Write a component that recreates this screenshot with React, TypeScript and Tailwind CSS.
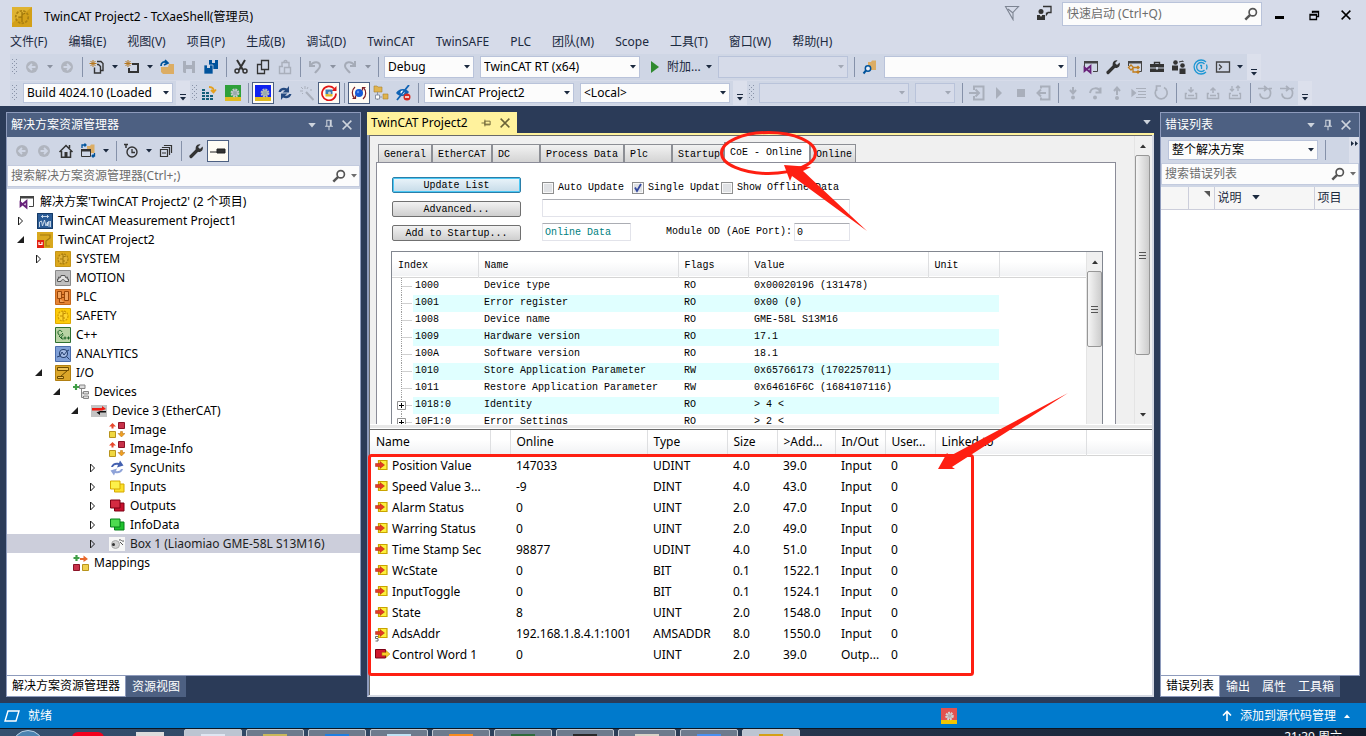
import type { ReactNode } from 'react'
import clsx from 'clsx'

const ICONS: Record<string, ReactNode> = {
  back: <><circle cx="8" cy="8" r="6" fill="#b0b5bf" /><path d="M11.5 8H5M8 5 5 8l3 3" stroke="#cfd6e5" strokeWidth="1.8" fill="none" /></>,
  forward: <><circle cx="8" cy="8" r="6" fill="#b0b5bf" /><path d="M4.5 8H11M8 5l3 3-3 3" stroke="#cfd6e5" strokeWidth="1.8" fill="none" /></>,
  newProject: <><path d="M4 1v7M.5 4.5h7M1.5 2l5 5M6.500 2l-5 5" stroke="#b5761c" /><path d="M8 2.500h4l2 2v7h-2M5.500 8.500v5.500h6V7.500l-2-2H8" stroke="#333" strokeWidth="1.400" fill="none" /></>,
  newItem: <><path d="M4 1v7M.5 4.500h7M1.500 2l5 5M6.500 2l-5 5" stroke="#b5761c" /><path d="M8 5h6v8H5V9" stroke="#333" strokeWidth="2" fill="none" /></>,
  open: <><path d="M2 13V8h7l1-3h5v10H4z" fill="#dcad64" /><path d="M2 7c0-4 3-5 6-3M6 1l3 3-4 2" stroke="#00539c" strokeWidth="1.700" fill="none" /></>,
  save: <path d="M2 2h12v12H3l-1-1zM5 2v4h6V2M5 14v-4h6v4" fill="#a9afbb" fillRule="evenodd" />,
  saveAll: <><path d="M6 1h9v9H9V7H6z" fill="#00539c" /><path d="M9 1h3v3H9z" fill="#cfd6e5" /><path d="M1 6h9v9H1z" fill="#00539c" stroke="#cfd6e5" strokeWidth=".7" /><path d="M4 6h3v3H4z" fill="#cfd6e5" /></>,
  cut: <><path d="M4 1l6 10M12 1 6 11" stroke="#333" strokeWidth="2" /><circle cx="4" cy="12" r="2" stroke="#333" strokeWidth="1.500" fill="none" /><circle cx="12" cy="12" r="2" stroke="#333" strokeWidth="1.500" fill="none" /></>,
  copy: <path d="M6.500 10.500V1.500h7v9zM6 5.500H2.500v9h7V11" stroke="#333" strokeWidth="1.300" fill="none" />,
  paste: <path d="M8 14.500H2.500v-7H6M7.500 8.500h6v6h-6zM5 7V3.500h7V8M7 3c0-2 3-2 3 0" stroke="#a9afbb" strokeWidth="1.400" fill="none" />,
  undo: <path d="M3 2v5h5M3 7c4-6 10-4 10 0 0 3-3 4-5 7" stroke="#a5abb7" strokeWidth="2" fill="none" />,
  redo: <path d="M13 2v5H8M13 7C9 1 3 3 3 7c0 3 3 4 5 7" stroke="#a5abb7" strokeWidth="2" fill="none" />,
  findFiles: <><path d="M6 3h3l1-1.500h4V11H6z" fill="#dcad64" /><circle cx="6" cy="9.500" r="2.700" stroke="#00539c" strokeWidth="1.500" fill="#e8eef8" /><path d="M4 11.500 1.500 14.500" stroke="#00539c" strokeWidth="2" /></>,
  vsWindow: <><path d="M1.500 8V2.500h13v10H10" stroke="#444" fill="none" /><path d="M1 2h14v2.500H1z" fill="#444" /><path d="M1.500 8.500l6 5V7l-6 5z" stroke="#68217a" strokeWidth="1.800" fill="none" /></>,
  wrench: <><path d="M3 13.500 9 7.500" stroke="#333" strokeWidth="3.200" strokeLinecap="round" /><path d="M12.500 1.500 10 4l2 2 2.600-2.500c1 3-1 5.500-3.600 5.500-3 0-4-3-3-5.500 1-1.500 2.500-2.500 4.500-2z" fill="#333" /></>,
  objBrowser: <><path d="M1.500 7V2.500h13v10H12" stroke="#444" fill="none" /><path d="M1 2h14v2.500H1z" fill="#444" /><path d="m4 6 2.500 2.500L4 11 1.500 8.500zM6 8.500h4M6 8.500V13h4" stroke="#c27d1a" strokeWidth="1.300" fill="#cfd6e5" /><path d="m11 6.500 2 2-2 2-2-2zM11 11l2 2-2 2-2-2z" fill="#c27d1a" /></>,
  toolbox: <><path d="M5.500 5V3.500h5V5" stroke="#333" strokeWidth="1.400" fill="none" /><path d="M1 5h14v3.500H1zM1 9.500h14V13H1z" fill="#333" /><path d="M7 8h2v2.500H7z" fill="#cfd6e5" /></>,
  team: <><circle cx="4.500" cy="3.500" r="2.300" fill="#333" /><circle cx="11.500" cy="6.500" r="2.300" fill="#333" /><path d="M1 6.500h6v5H1zM8.500 9.500h6V15h-6z" fill="#333" /><path d="M8 3l4-1v1" stroke="#333" fill="none" /></>,
  target: <><path d="M13 3a7 7 0 1 0 0 10M11.500 5a4.500 4.500 0 1 0 0 6" stroke="#1d97d4" strokeWidth="1.300" fill="none" /><path d="M7 6.500h1.500V10M13.500 5.500a6 6 0 0 1 0 5" stroke="#1d97d4" strokeWidth="1.300" fill="none" /></>,
  console: <path d="M1.500 3h13v10h-13zM4 5.500 6.500 8 4 10.500" stroke="#444" strokeWidth="1.300" fill="none" />,
  activate: <><path d="M1 4h3v2H1zM1 7h3v2H1zM5 7h3v2H5zM1 10h3v2H1zM5 10h3v2H5zM9 10h3v2H9zM1 13h3v2H1zM5 13h3v2H5zM9 13h3v2H9z" fill="#13607a" /><path d="M8 2c4 0 5 2 4.500 5M10 5l2.500 2.500L15 4.500" stroke="#e5a01c" strokeWidth="1.800" fill="none" /></>,
  cogGreen: <><path d="M0 0h16v12H0z" fill="#2fa03a" /><path d="M0 12h16v4H0z" fill="#e0bb22" /><circle cx="10" cy="8" r="3.200" stroke="#c3c8cb" strokeWidth="2.500" strokeDasharray="1.700 .8" fill="#9aa" /></>,
  cogBlue: <><path d="M0 0h16v12H0z" fill="#1022f0" /><path d="M0 12h16v4H0z" fill="#e0bb22" /><circle cx="10" cy="8" r="3.200" stroke="#b5b9bd" strokeWidth="2.500" strokeDasharray="1.700 .8" fill="#9aa" /></>,
  cogRed: <><path d="M0 0h16v12H0z" fill="#e2524f" /><path d="M0 12h16v4H0z" fill="#f2c500" /><circle cx="8.500" cy="8" r="3" stroke="#d6cfd0" strokeWidth="2.500" strokeDasharray="1.700 .8" fill="#b9a9aa" /></>,
  reload: <path d="M1.500 7c1-4 5-5 8.500-3.500L12 1v6.500H5.500L8 5.500c-2-.5-3.500 0-4 1.500zM14.500 9c-1 4-5 5-8.500 3.500L4 15V8.500h6.500L8 10.500c2 .5 3.500 0 4-1.500z" fill="#254a80" />,
  wand: <><path d="m7 7 7.500 8" stroke="#a9afbb" strokeWidth="2" /><path d="M6 1v3M1 6h3M2 2l2 2M9 2 8 4M3 9l1-1M11 5h2" stroke="#a9afbb" /></>,
  freeRun: <><path d="M13 3.500a7 7 0 1 0 2 5" stroke="#e01515" strokeWidth="1.700" fill="none" /><path d="M15.500 1v5h-5z" fill="#e01515" /><path d="M4.500 4.500h7v4.500h-7z" fill="#3c80b8" /><path d="M4.500 9h7v2.500h-7z" fill="#e0bb22" /><circle cx="8.500" cy="8" r="1.500" fill="#ccc" /></>,
  onlineData: <><circle cx="8" cy="8" r="4" fill="#1259d8" /><circle cx="7" cy="7" r="1.200" fill="#5c93f0" /><path d="M4 2C.5 5 .5 10 3.500 13.500M1.500 13.500h3v-3M12 14c3.500-3 3.500-8 .5-11.500M14.500 2.500h-3v3" stroke="#7c1f26" strokeWidth="1.200" fill="none" /></>,
  subItems: <><path d="M1 1h3l1 1h4v5H1zM10 9h5v5h-5z" fill="#e0b44f" stroke="#a9822e" strokeWidth=".6" /><path d="M4.500 7v8M4.500 12H9" stroke="#8a93a3" /><path d="M2.500 10h4v4h-4z" fill="#fff" stroke="#8a93a3" /></>,
  hideDisabled: <><path d="M1 8c3-5 10-5 13-1-3 5-10 5-13 1z" fill="#0f63b5" /><circle cx="7.500" cy="7.500" r="2" fill="#fff" /><path d="M2 15 14 0" stroke="#0f63b5" strokeWidth="1.800" /><circle cx="12" cy="12" r="3.500" fill="#d32a22" /><path d="M10 12h4" stroke="#fff" strokeWidth="1.500" /></>,
  login: <path d="M5 5V1.500h9.500v13H5V11M0 8h10M6.500 4.500 10 8l-3.500 3.500" stroke="#a9afbb" strokeWidth="2" fill="none" />,
  logout: <path d="M6 3.500v-2h8.500v13H6v-2M11 8H2.500M6 4.500 2.500 8 6 11.500" stroke="#a9afbb" strokeWidth="2" fill="none" />,
  start: <path d="M5 2 11 8l-6 6z" fill="#a9afbb" />,
  stop: <path d="M4 4h8v8H4z" fill="#a9afbb" />,
  stepInto: <><path d="M8 2v6M5 5l3 3.500L11 5" stroke="#a9afbb" strokeWidth="2" fill="none" /><circle cx="8" cy="12.500" r="2" fill="#a9afbb" /></>,
  stepOver: <><path d="M3 8c1-6 9-6 10-1M13.500 2.500V7.500h-5" stroke="#a9afbb" strokeWidth="2" fill="none" /><circle cx="8" cy="12.500" r="2" fill="#a9afbb" /></>,
  stepOut: <><path d="M8 10V3M5 6l3-3.500L11 6" stroke="#a9afbb" strokeWidth="2" fill="none" /><circle cx="8" cy="13" r="2" fill="#a9afbb" /></>,
  showNext: <path d="M5 3.500h10M7 6.500h8M7 9.500h8M5 12.500h10M1 5l3.500 3L1 11z" stroke="#a9afbb" strokeWidth="1.200" fill="#a9afbb" />,
  reset: <path d="M4 3.500a6 6 0 1 0 7-1M8 1H3.500v5" stroke="#a9afbb" strokeWidth="1.700" fill="none" />,
  down: <path d="M8 2v5M5.500 4.500 8 7l2.500-2.500M4 8.500H2.500v5h11v-5H12M5 10.500h6" stroke="#a9afbb" strokeWidth="1.500" fill="none" />,
  up: <path d="M8 8V3M5.500 5.500 8 3l2.500 2.500M4 8.500H2.500v5h11v-5H12M5 10.500h6" stroke="#a9afbb" strokeWidth="1.500" fill="none" />,
  upDown: <path d="M5 1v5M3 4l2 2 2-2M11 6V1M9 3l2-2 2 2M4 8.500H2.500v5h11v-5H12M5 10.500h6" stroke="#a9afbb" strokeWidth="1.300" fill="none" />,
  flow: <path d="M1 3.500h9M7 1l3 2.500L7 6M10 3.500c5 0 5 10-1.500 10C4 13.500 3 11 3 8.500M12 3.500h3" stroke="#a9afbb" strokeWidth="1.700" fill="none" />,
  home: <><path d="M1.500 9 8 2.500 14.500 9M3.500 8v6.300h9V8M11.500 2v3" stroke="#333" strokeWidth="1.500" fill="none" /><path d="M6.500 9h3v5h-3z" fill="#333" /></>,
  syncView: <><path d="M7 3h3l1-1.500h3.500V10H7z" fill="#dcad64" /><path d="M1.500 6.500h9v7h-9z" stroke="#333" fill="#cfd6e5" /><path d="M1 6h10v2.500H1z" fill="#333" /><path d="M2 5V2h4M4.500.5 6 2 4.500 3.500M14.500 10v3H12M13.500 11.500 12 13l1.500 1.500" stroke="#00539c" strokeWidth="1.300" fill="none" /></>,
  pending: <><path d="M1 1.500h4M3 1.500V5" stroke="#333" strokeWidth="1.500" /><circle cx="9" cy="9" r="5" stroke="#333" strokeWidth="1.400" fill="none" /><path d="M9 6v3.500h3" stroke="#333" strokeWidth="1.300" fill="none" /></>,
  collapse: <path d="M2.500 6.500h7v7h-7zM4 10h4M4.500 5V4.500h7v7H11M6.500 3V2.500h7v7H13" stroke="#333" strokeWidth="1.200" fill="none" />,
  preview: <path d="M0 9h7M7 6h8v4H7z" stroke="#222" strokeWidth="1" fill="#333" />,
  flag: <path d="M1.500 1.500h13L9 7.500v7zM4 4l5 4" stroke="#7d8492" strokeWidth="1.100" fill="none" />,
  feedback: <><path d="M7 1.500h8v6h-3l-1.500 2v-2" stroke="#333" strokeWidth="1.300" fill="none" /><circle cx="5" cy="6.500" r="2.500" fill="#333" /><path d="M1 10h8v5H1z" fill="#333" /><path d="m4 10 1 2 1-2" fill="#fff" /></>,
  search: <><circle cx="10" cy="6" r="4.200" stroke="#555" strokeWidth="1.900" fill="none" /><path d="m7 9-5.500 5.500" stroke="#555" strokeWidth="2.800" /></>,
  measurement: <><path d="M0 0h16v16H0z" fill="#2b5c96" /><path d="M.5.5h15v15H.5z" stroke="#163a66" fill="none" /><path d="M2.500 14V9l2-1 1 5 2-6 1.500 6 1.500-4V13l1.500-5v6M13.500 14V8M4 3.500h8M5.500 2v3M10.500 2v3" stroke="#d3e0ee" strokeWidth=".9" fill="none" /></>,
  project: <><path d="M0 0h16v16H0z" fill="#d9a81e" /><path d="M3 3h10v3l-4 3v5h4" stroke="#a3780c" strokeWidth="1.200" fill="none" /><path d="M0 8h7v8H0z" fill="#e32213" /><path d="M2 10v2.500h3V10" stroke="#fff" strokeWidth="1.200" fill="none" /></>,
  system: <><path d="M.5.5h15v15H.5z" fill="#dca81c" stroke="#c4951a" /><circle cx="8" cy="8" r="5" stroke="#b08210" strokeWidth="1.300" strokeDasharray="2 1" fill="#e2b43a" /><path d="M8 3v10M5 8h3M8 6l3-1M8 10h2" stroke="#a0770a" /></>,
  motion: <><path d="M.5.5h15v15H.5z" fill="#bfbfbf" stroke="#8a8a8a" /><path d="M2.500 11.500V9h1.500l-.5-2 2 .5.500-2h4l.5 2 2-.5-.5 2h1.500v2.500H10c0-2.500-4-2.500-4 0z" stroke="#555" fill="#e3e3e3" /></>,
  plc: <><path d="M.5.5h15v15H.5z" fill="#e58334" stroke="#c4661c" /><path d="M2.500 2.500h4v7h-4zM9.500 2.500h4v9h-4zM6.500 5.500h3M4.500 9.500v4h5M9.500 8.500h-3" stroke="#9a470a" fill="#f1a35e" /></>,
  safety: <><path d="M.5.5h15v15H.5z" fill="#fccb0a" stroke="#dfa900" /><circle cx="8" cy="8" r="5" stroke="#d09a00" strokeWidth="1.200" strokeDasharray="2 1" fill="#ffd52c" /><path d="M8 3v10M5 8h3M8 6l3-1M8 10h2" stroke="#c08a00" /></>,
  cpp: <><path d="M.5.5h15v15H.5z" fill="#b9d3a4" stroke="#2f7030" /><path d="M7 5C6 2.500 2.500 3 3 6s3 2.500 4 1l1-1M8.500 8c-2-1-3 5 0 4M8.500 11h3M10 9.500v3M12 11h3M13.500 9.500v3M4 9l3 3" stroke="#1d6325" fill="none" /></>,
  analytics: <><path d="M.5.5h15v15H.5z" fill="#7f9fd6" stroke="#4a6cab" /><circle cx="8.500" cy="7.500" r="4" stroke="#26406f" strokeWidth="1.100" fill="#a4bbe4" /><path d="m11.500 10.500 3 3M2 11l3-1 2-4 2 3 3-4 2-1" stroke="#26406f" fill="none" /></>,
  io: <><path d="M.5.5h15v15H.5z" fill="#dba72a" stroke="#b17f12" /><path d="M2.500 2.500h11v3h-11zM2.500 11.500h6v2h-6zM12.500 5.500 5.500 11.500" stroke="#6e4c00" fill="#eec35b" /></>,
  devices: <><path d="M3 0v6M0 3h6" stroke="#3f9e46" strokeWidth="2.200" /><path d="M6.500 1h5.500v3.500H6.500zM10.500 7.500h5v2.500h-5zM10.500 12h5v2.500h-5zM8.500 4.500v9h2M8.500 9h2" stroke="#858585" fill="#ddd" /></>,
  ethercat: <><path d="M0 2h16v12H0z" fill="#c4c4c4" /><path d="M1 5h10V3l4 3-4 1.500H1z" fill="#ef1b12" /><path d="M15 9.500H9V12L5.500 9.500 9 8h6z" fill="#111" /></>,
  image: <><path d="M9.500.5h6v6h-6z" fill="#c8324a" stroke="#8b1427" /><path d="M.5 9.500h6v6h-6z" fill="#f0d840" stroke="#b8941d" /><path d="M3.500 1 7 4.500H4.500V6.500h-2v-2H0z" fill="#e8482c" /><path d="M12.500 15 9 11.500h2.500V9.500h2v2H16z" fill="#f0a020" stroke="#b06c10" strokeWidth=".5" /></>,
  sync: <><path d="M2 7c1-4 5-5 8-4l1-2.500 3.500 5-6.500 2 1-2.500C7 4.500 5 5 4 7z" fill="#4461b0" /><path d="M14 9c-1 4-5 5-8 4l-1 2.500-3.500-5 6.500-2-1 2.500c2 .5 4 0 5-2z" fill="#8fa3d8" /></>,
  inputs: <><path d="M5.500 5h9.500v8H5.500z" fill="#fbe02c" stroke="#d5a900" /><path d="M1.500 2h9.500v8H1.500z" fill="#fdf04a" stroke="#d5a900" /></>,
  outputs: <><path d="M5.500 5h9.500v8H5.500z" fill="#c8102e" stroke="#7c0014" /><path d="M1.500 2h9.500v8H1.500z" fill="#d42b42" stroke="#7c0014" /></>,
  infoData: <><path d="M5.500 5h9.500v8H5.500z" fill="#1fc22d" stroke="#07801a" /><path d="M1.500 2h9.500v8H1.500z" fill="#4ddb4f" stroke="#07801a" /></>,
  box: <><path d="M0 1h16v14H0z" fill="#f6f6f6" /><circle cx="6.500" cy="8.500" r="4" fill="#d2d2d2" stroke="#aaa" /><circle cx="4.500" cy="8.500" r="1.500" fill="#333" /><path d="M10 4c2-1 3 2 5 1M11 6l3 3" stroke="#555" fill="none" /></>,
  mappings: <><path d="M3.500 0v6M.5 3h6" stroke="#3f9e46" strokeWidth="2.200" /><path d="M7 3h3.500V.5l4.500 3.500-4.500 3V5H7z" fill="#e8682c" /><path d="M.5 9.500h6v6h-6z" fill="#c8324a" stroke="#8b1427" /><path d="M9.500 9.500h6v6h-6z" fill="#f0d050" stroke="#b8941d" /></>,
  varIn: <><path d="M3.500 2.500h8.500v9h-8.500z" fill="#fdf03c" stroke="#c9a300" strokeWidth="1.200" /><path d="M.5 5.500h4.500V3.500L9.500 7 5 10.500V8.500H.5z" fill="#e23a25" stroke="#b02412" strokeWidth=".5" /></>,
  varLinked: <><path d="M3.500 2.500h8.500v9h-8.500z" fill="#fdf03c" stroke="#c9a300" strokeWidth="1.200" /><path d="M.5 5.500h4.500V3.500L9.500 7 5 10.500V8.500H.5z" fill="#e23a25" stroke="#b02412" strokeWidth=".5" /><path d="M3 10.500H.5v2H3v2.500H.5" stroke="#666" fill="none" /></>,
  varOut: <><path d="M.5 2.500h10v8.500H.5z" fill="#d0182e" stroke="#7c0014" /><path d="M7 5.500h4V3.500L15 7l-4 3.500V8.500H7z" fill="#f8cd2d" stroke="#b18500" strokeWidth=".5" /></>,
  app: <><path d="M0 0h16v16H0z" fill="#d3a018" /><path d="M0 0h16L0 13z" fill="#e8bf43" opacity=".6" /><circle cx="8" cy="8" r="5" stroke="#ac8111" strokeWidth="1.400" strokeDasharray="2 1" fill="none" /><path d="M8 4v8M5 8h3M8 6l2.500-1" stroke="#9c7408" /></>,
  pin: <path d="M5.500 2.500h5v7h-5zM3.500 9.500h9M8 10v4M9.500 3v6" stroke="currentColor" strokeWidth="1.200" fill="none" />,
  close: <path d="m3 3 10 10M13 3 3 13" stroke="currentColor" strokeWidth="1.700" fill="none" />,
}

function Icon({ name, className = 'size-4' }: { name: string; className?: string }) {
  return (
    <svg viewBox="0 0 16 16" className={clsx('shrink-0', className)} aria-hidden="true">
      {ICONS[name]}
    </svg>
  )
}

function Arrow({ className = 'h-1 w-1.5' }: { className?: string }) {
  return (
    <svg viewBox="0 0 6 4" className={clsx('shrink-0 fill-current', className)} aria-hidden="true">
      <path d="M0 0h6L3 3.500z" />
    </svg>
  )
}

function ToolButton({ name, boxed }: { name: string; boxed?: boolean }) {
  return (
    <button
      aria-label={name}
      className={clsx('flex h-[22px] w-[22px] shrink-0 items-center justify-center', boxed && 'border border-[#4d6082] bg-[#fffcf4]')}
    >
      <Icon name={name} />
    </button>
  )
}

function Caret({ disabled }: { disabled?: boolean }) {
  return (
    <button aria-label="More" className={clsx('flex h-[22px] w-[13px] shrink-0 items-center justify-center', disabled ? 'text-[#8b92a0]' : 'text-[#1b293e]')}>
      <Arrow />
    </button>
  )
}

function Sep() {
  return (
    <div className="flex w-2 shrink-0 justify-center">
      <div className="h-5 w-px bg-[#8591a9]" />
    </div>
  )
}

// Dotted drag handle at the start of each toolbar
function Grip() {
  return (
    <svg viewBox="0 0 8 18" className="h-[18px] w-2 shrink-0" aria-hidden="true">
      <path d="M2.500 1v16M6.500 1v16" stroke="#8993a8" strokeDasharray="1 3" />
      <path d="M4.500 3v14" stroke="#8993a8" strokeDasharray="1 3" />
    </svg>
  )
}

function Overflow() {
  return (
    <button aria-label="Toolbar options" className="flex h-full w-3.5 shrink-0 flex-col items-center justify-end gap-0.5 bg-[#dce0ec] pb-1 text-[#1b293e]">
      <span className="h-px w-1.5 bg-current" />
      <Arrow />
    </button>
  )
}

function Combo({ label, value, className, disabled }: { label: string; value: string; className: string; disabled?: boolean }) {
  return (
    <div className={clsx('relative shrink-0', className)}>
      <select
        aria-label={label}
        disabled={disabled}
        className={clsx('h-full w-full appearance-none border border-[#b9c3da] pl-[3px] text-black', disabled ? 'bg-[#d6dbe9]' : 'bg-[#fcfcfc]')}
      >
        <option>{value}</option>
      </select>
      <Arrow className={clsx('pointer-events-none absolute top-1/2 right-1 -mt-0.5 h-1 w-1.5', disabled ? 'text-[#a2a8b5]' : 'text-[#1b293e]')} />
    </div>
  )
}

const MENUS = ['文件(F)', '编辑(E)', '视图(V)', '项目(P)', '生成(B)', '调试(D)', 'TwinCAT', 'TwinSAFE', 'PLC', '团队(M)', 'Scope', '工具(T)', '窗口(W)', '帮助(H)']

function TitleBar() {
  return (
    <div className="flex h-[30px] shrink-0 items-center pr-1.5 pl-3">
      <Icon name="app" className="mt-1 size-5" />
      <div className="mt-1 ml-3 flex-1 text-black">TwinCAT Project2 - TcXaeShell(管理员)</div>
      <button aria-label="Notifications" className="mr-4 mb-1"><Icon name="flag" /></button>
      <button aria-label="Feedback" className="mr-2.5 mb-1"><Icon name="feedback" /></button>
      <div className="mb-0.5 flex h-6 w-[200px] items-center border border-[#b9c3da] bg-[#fcfcfc] pr-[3px] pl-1">
        <input aria-label="快速启动" placeholder="快速启动 (Ctrl+Q)" className="min-w-0 flex-1 outline-none placeholder:text-[#6d6d6d]" />
        <Icon name="search" className="size-3.5" />
      </div>
      <button aria-label="Minimize" className="flex h-6 w-[34px] items-center justify-center"><span className="mt-1 h-[3px] w-[9px] bg-black" /></button>
      <button aria-label="Restore" className="flex h-6 w-9 items-center justify-center">
        <svg viewBox="0 0 11 11" className="size-[11px]"><path d="M3.500 3V1.500h6v5H8M1 4.500h6.500v5H1zM1 5h6M3.500 2h6" stroke="#000" strokeWidth="1.300" fill="none" /></svg>
      </button>
      <button aria-label="Close" className="flex h-6 w-7 items-center justify-center text-black"><Icon name="close" className="size-3.5" /></button>
    </div>
  )
}

function Toolbars() {
  return (
    <div className="flex shrink-0 flex-col gap-px overflow-hidden pb-px pl-2.5 text-black">
      <div className="flex h-[26px] w-fit items-center bg-[#cfd6e5]">
        <Grip />
        <div className="w-[3px]" />
        <ToolButton name="back" /><Caret disabled /><ToolButton name="forward" /><Sep />
        <ToolButton name="newProject" /><Caret /><ToolButton name="newItem" /><Caret />
        <ToolButton name="open" /><ToolButton name="save" /><ToolButton name="saveAll" /><Sep />
        <ToolButton name="cut" /><ToolButton name="copy" /><ToolButton name="paste" /><Sep />
        <ToolButton name="undo" /><Caret disabled /><ToolButton name="redo" /><Caret disabled /><Sep />
        <Combo label="Configuration" value="Debug" className="ml-0.5 h-[22px] w-[90px]" />
        <Combo label="Platform" value="TwinCAT RT (x64)" className="ml-1.5 h-[22px] w-40" />
        <button className="ml-[11px] flex items-center gap-2 text-[#1b293e]">
          <svg viewBox="0 0 8 12" className="h-3 w-2"><path d="M0 0l8 6-8 6z" fill="#2f8a2f" /></svg>
          附加...
        </button>
        <div className="w-0.5" />
        <Caret />
        <Combo label="Process" value="" disabled className="ml-0.5 h-[22px] w-[130px]" />
        <div className="w-[3px]" />
        <Sep />
        <ToolButton name="findFiles" />
        <Combo label="Find" value="" className="ml-[3px] h-[22px] w-[184px]" />
        <div className="w-1" />
        <Sep />
        <ToolButton name="vsWindow" /><ToolButton name="wrench" /><ToolButton name="objBrowser" /><ToolButton name="toolbox" />
        <ToolButton name="team" /><ToolButton name="target" /><ToolButton name="console" /><Caret />
        <Overflow />
      </div>
      <div className="flex h-6 w-fit items-center bg-[#cfd6e5]">
        <Grip />
        <Combo label="Build" value="Build 4024.10 (Loaded" className="ml-[5px] h-5 w-[150px]" />
        <div className="w-[3px]" />
        <Overflow />
        <Grip />
        <ToolButton name="activate" />
        <div className="w-0.5" />
        <ToolButton name="cogGreen" /><Sep />
        <ToolButton name="cogBlue" boxed /><ToolButton name="reload" /><ToolButton name="wand" /><ToolButton name="freeRun" boxed /><Sep />
        <ToolButton name="onlineData" boxed /><ToolButton name="subItems" /><ToolButton name="hideDisabled" /><Sep />
        <Combo label="Project" value="TwinCAT Project2" className="ml-0.5 h-5 w-[150px]" />
        <Combo label="Target" value="<Local>" className="ml-1.5 h-5 w-[150px]" />
        <div className="w-[3px]" />
        <Overflow />
        <Grip />
        <Combo label="PLC project" value="" disabled className="ml-1 h-5 w-[150px]" />
        <Combo label="Port" value="" disabled className="ml-1.5 h-5 w-10" />
        <div className="w-[3px]" />
        <Sep />
        <ToolButton name="login" /><ToolButton name="start" /><ToolButton name="stop" /><ToolButton name="logout" /><Sep />
        <ToolButton name="stepInto" /><ToolButton name="stepOver" /><ToolButton name="stepOut" /><ToolButton name="showNext" /><ToolButton name="reset" /><Sep />
        <ToolButton name="down" /><ToolButton name="up" /><ToolButton name="upDown" /><Sep />
        <ToolButton name="flow" /><ToolButton name="flow" />
        <Overflow />
      </div>
    </div>
  )
}

function PanelTitle({ title }: { title: string }) {
  return (
    <div className="flex h-6 shrink-0 items-center bg-[#4d6082] pr-1.5 pl-1 text-white">
      <h2 className="flex-1">{title}</h2>
      <button aria-label="Options" className="flex w-4 justify-center text-[#ced4dd]"><Arrow className="h-[5px] w-2" /></button>
      <button aria-label="Pin" className="ml-0.5 text-[#ced4dd]"><Icon name="pin" className="size-3.5" /></button>
      <button aria-label="Close" className="ml-1 text-[#ced4dd]"><Icon name="close" className="size-3.5" /></button>
    </div>
  )
}

function SearchBox({ label, placeholder }: { label: string; placeholder: string }) {
  return (
    <div className="flex h-[22px] shrink-0 items-center border border-[#c3cbde] bg-[#fcfcfc] pr-0.5 pl-[3px]">
      <input aria-label={label} placeholder={placeholder} className="min-w-0 flex-1 outline-none placeholder:text-[#6d6d6d]" />
      <Icon name="search" className="size-3.5" />
      <Arrow className="ml-[5px] h-1 w-1.5 text-[#6d6d6d]" />
    </div>
  )
}

const INDENT = ['pl-2.5', 'pl-7', 'pl-[46px]', 'pl-16', 'pl-[82px]']

type Node = { level: number; icon: string; text: string; state?: 'open' | 'closed'; selected?: boolean }

const TREE: Node[] = [
  { level: 0, icon: 'measurement', text: 'TwinCAT Measurement Project1', state: 'closed' },
  { level: 0, icon: 'project', text: 'TwinCAT Project2', state: 'open' },
  { level: 1, icon: 'system', text: 'SYSTEM', state: 'closed' },
  { level: 1, icon: 'motion', text: 'MOTION' },
  { level: 1, icon: 'plc', text: 'PLC' },
  { level: 1, icon: 'safety', text: 'SAFETY' },
  { level: 1, icon: 'cpp', text: 'C++' },
  { level: 1, icon: 'analytics', text: 'ANALYTICS' },
  { level: 1, icon: 'io', text: 'I/O', state: 'open' },
  { level: 2, icon: 'devices', text: 'Devices', state: 'open' },
  { level: 3, icon: 'ethercat', text: 'Device 3 (EtherCAT)', state: 'open' },
  { level: 4, icon: 'image', text: 'Image' },
  { level: 4, icon: 'image', text: 'Image-Info' },
  { level: 4, icon: 'sync', text: 'SyncUnits', state: 'closed' },
  { level: 4, icon: 'inputs', text: 'Inputs', state: 'closed' },
  { level: 4, icon: 'outputs', text: 'Outputs', state: 'closed' },
  { level: 4, icon: 'infoData', text: 'InfoData', state: 'closed' },
  { level: 4, icon: 'box', text: 'Box 1 (Liaomiao GME-58L S13M16)', state: 'closed', selected: true },
  { level: 2, icon: 'mappings', text: 'Mappings' },
]

function TreeRow({ node }: { node: Node }) {
  return (
    <li className={clsx('flex h-[19px] items-center', INDENT[node.level], node.selected && 'bg-[#cccedb] text-[#1e1e1e]')}>
      <span className="w-5 shrink-0">
        {node.state && (
          <svg viewBox="0 0 8 10" className="h-2.5 w-2">
            {node.state === 'open' ? <path d="M7 1v7H0z" fill="#1e1e1e" /> : <path d="M1.500 1 5.500 5l-4 4z" stroke="#1e1e1e" fill="none" />}
          </svg>
        )}
      </span>
      <Icon name={node.icon} />
      <span className="ml-[5px] whitespace-nowrap">{node.text}</span>
    </li>
  )
}

function SolutionExplorer() {
  return (
    <div className="flex w-[355px] shrink-0 flex-col">
      <div className="flex min-h-0 flex-1 flex-col border border-[#8e9bbc] bg-white">
        <PanelTitle title="解决方案资源管理器" />
        <div className="flex h-7 shrink-0 items-center bg-[#cfd6e5] pl-1">
          <ToolButton name="back" /><ToolButton name="forward" /><ToolButton name="home" /><ToolButton name="syncView" /><Caret />
          <Sep />
          <ToolButton name="pending" /><Caret /><ToolButton name="collapse" /><Sep />
          <ToolButton name="wrench" /><ToolButton name="preview" boxed />
        </div>
        <SearchBox label="搜索解决方案资源管理器" placeholder="搜索解决方案资源管理器(Ctrl+;)" />
        <ul className="min-h-0 flex-1 overflow-hidden border-t-2 border-[#cfd6e5] pt-[3px] text-black">
          <li className="flex h-[19px] items-center pl-3">
            <Icon name="vsWindow" />
            <span className="ml-[5px]">解决方案'TwinCAT Project2' (2 个项目)</span>
          </li>
          {TREE.map((node) => <TreeRow key={node.text} node={node} />)}
        </ul>
      </div>
      <div className="flex h-[21px] shrink-0">
        <button className="border-x border-b border-[#8e9bbc] bg-white px-[5px] text-black">解决方案资源管理器</button>
        <button className="bg-[#4d6082] px-1.5 text-white">资源视图</button>
      </div>
    </div>
  )
}

const TABS = [
  { text: 'General', width: 'w-[54px]' },
  { text: 'EtherCAT', width: 'w-[60px]' },
  { text: 'DC', width: 'w-12' },
  { text: 'Process Data', width: 'w-[84px]' },
  { text: 'Plc', width: 'w-12' },
  { text: 'Startup', width: 'w-[52px]' },
  { text: 'CoE - Online', width: 'w-[86px]', active: true },
  { text: 'Online', width: 'w-[46px]' },
]

const OBJECTS = [
  ['1000', 'Device type', 'RO', '0x00020196 (131478)'],
  ['1001', 'Error register', 'RO', '0x00 (0)'],
  ['1008', 'Device name', 'RO', 'GME-58L S13M16'],
  ['1009', 'Hardware version', 'RO', '17.1'],
  ['100A', 'Software version', 'RO', '18.1'],
  ['1010', 'Store Application Parameter', 'RW', '0x65766173 (1702257011)'],
  ['1011', 'Restore Application Parameter', 'RW', '0x64616F6C (1684107116)'],
  ['1018:0', 'Identity', 'RO', '> 4 <'],
  ['10F1:0', 'Error Settings', 'RO', '> 2 <'],
]

function Check({ label, checked }: { label: string; checked?: boolean }) {
  return (
    <label className="flex items-center gap-1 overflow-hidden whitespace-nowrap">
      <span className="grid size-3 shrink-0">
        <input type="checkbox" defaultChecked={checked} className="peer col-start-1 row-start-1 size-3 appearance-none border border-[#8e8f8f] bg-[#dfe1e4] shadow-[inset_0_0_0_1px_#f8f8f8]" />
        <svg viewBox="0 0 12 12" className="pointer-events-none invisible col-start-1 row-start-1 size-3 peer-checked:visible">
          <path d="m3 5.500 2 3.500 4-7" stroke="#3449a0" strokeWidth="1.800" fill="none" />
        </svg>
      </span>
      {label}
    </label>
  )
}

function FormButton({ children, focused }: { children: ReactNode; focused?: boolean }) {
  return (
    <button
      className={clsx(
        'h-4 rounded-[2px] border text-center leading-4',
        focused ? 'border-[#2b7ea8] bg-linear-to-b from-[#eaf4fa] to-[#c6dbe8] shadow-[inset_0_0_0_1px_#4bc8f5]' : 'border-[#707070] bg-linear-to-b from-[#f2f2f2] to-[#cfcfcf]',
      )}
    >
      {children}
    </button>
  )
}

function ScrollBar({ thumb, tail }: { thumb: string; tail?: boolean }) {
  return (
    <div className="flex w-4 shrink-0 flex-col items-center border-l border-[#e4e4e4] bg-[#f0f0f0] text-[#333]">
      <div className="flex h-[19px] shrink-0 items-center"><Arrow className="h-1 w-1.5 rotate-180" /></div>
      <div className={clsx('flex w-[15px] shrink-0 flex-col items-center justify-center gap-0.5 rounded-[2px] border border-[#979797] bg-linear-to-r from-[#f5f5f5] to-[#cdcdcd]', thumb)}>
        <span className="h-px w-[7px] bg-[#555]" />
        <span className="h-px w-[7px] bg-[#555]" />
        <span className="h-px w-[7px] bg-[#555]" />
      </div>
      {tail && <div className="mt-auto flex h-[18px] items-center"><Arrow /></div>}
    </div>
  )
}

const OBJ_TH = 'border-r border-[#dedfe1] pt-1 pl-1.5 text-left font-normal'

function ObjectTable() {
  return (
    <div className="mr-3 ml-3.5 flex min-h-0 flex-1 overflow-hidden border border-b-0 border-[#828790] bg-white">
      <div className="min-w-0 flex-1">
        <table className="w-full table-fixed border-collapse">
          <colgroup>
            <col className="w-[21px]" /><col className="w-[65px]" /><col className="w-[200px]" /><col className="w-[70px]" />
            <col className="w-[180px]" /><col className="w-[71px]" /><col />
          </colgroup>
          <thead>
            <tr className="h-[25px] border-b border-[#d5d5d5] bg-linear-to-b from-white from-40% to-[#f1f2f4]">
              <th colSpan={2} className={OBJ_TH}>Index</th>
              <th className={OBJ_TH}>Name</th>
              <th className={OBJ_TH}>Flags</th>
              <th className={OBJ_TH}>Value</th>
              <th className={OBJ_TH}>Unit</th>
              <th />
            </tr>
          </thead>
          <tbody>
            {OBJECTS.map(([index, name, flags, value], i) => {
              const stripe = i % 2 === 1 && 'bg-[#e0ffff]'
              return (
                <tr key={index} className="h-[17px] whitespace-nowrap">
                  <td>
                    <svg viewBox="0 0 21 17" className="block h-[17px] w-[21px]">
                      <path d="M9.500 0v17M9.500 8.500H20" stroke="#a0a0a0" strokeDasharray="1 1" fill="none" />
                      {index.includes(':') && (
                        <>
                          <path d="M5.500 4.500h8v8h-8z" fill="#fff" stroke="#919191" />
                          <path d="M7 8.500h5M9.500 6v5" stroke="#000" />
                        </>
                      )}
                    </svg>
                  </td>
                  <td className={clsx('pl-0.5', stripe)}>{index}</td>
                  <td className={clsx('pl-1.5', stripe)}>{name}</td>
                  <td className={clsx('pl-1.5', stripe)}>{flags}</td>
                  <td className={clsx('pl-1.5', stripe)}>{value}</td>
                  <td className={clsx(stripe)} />
                  <td />
                </tr>
              )
            })}
          </tbody>
        </table>
      </div>
      <ScrollBar thumb="h-[76px]" />
    </div>
  )
}

const FIELD = 'h-[18px] rounded-[1px] border border-[#e2e3ea] border-t-[#abadb3] bg-white px-0.5 outline-none'

function DevicePages() {
  return (
    <div className="flex h-[288px] shrink-0 overflow-hidden bg-[#f0f0f0] pr-0.5 font-['Liberation_Mono','Noto_Sans_CJK_SC',monospace] text-[10px] text-black">
      <div className="flex min-w-0 flex-1 flex-col pt-1.5 pr-[18px] pl-1.5">
        <div role="tablist" className="flex h-5 shrink-0 items-end pl-0.5">
          {TABS.map((tab) => (
            <button
              key={tab.text}
              role="tab"
              aria-selected={!!tab.active}
              className={clsx(
                'overflow-hidden border border-b-0 border-[#8c8e94] pl-[5px] text-left whitespace-nowrap',
                tab.width,
                tab.active ? 'h-5 bg-white' : 'h-[18px] bg-linear-to-b from-[#f2f2f2] to-[#d4d4d4] pt-0.5',
              )}
            >
              {tab.text}
            </button>
          ))}
        </div>
        <div className="flex min-h-0 flex-1 flex-col border border-b-0 border-[#8b8c98] bg-white">
          <div className="flex gap-[21px] pt-3.5 pb-2.5 pl-[15px]">
            <div className="flex w-[129px] flex-col gap-2">
              <FormButton focused>Update List</FormButton>
              <FormButton>Advanced...</FormButton>
              <FormButton>Add to Startup...</FormButton>
            </div>
            <div className="flex w-[308px] flex-col">
              <div className="flex h-[22px] items-center">
                <div className="w-[90px] shrink-0"><Check label="Auto Update" /></div>
                <div className="w-[89px] shrink-0 overflow-hidden"><Check label="Single Updat" checked /></div>
                <div className="shrink-0"><Check label="Show Offline Data" /></div>
              </div>
              <input aria-label="Offline file" className={FIELD} />
              <div className="mt-1.5 flex items-center justify-between">
                <input aria-label="Data source" readOnly defaultValue="Online Data" className={clsx(FIELD, 'w-[89px] text-[#008080]')} />
                <label className="flex items-center gap-0.5 whitespace-nowrap">
                  Module OD (AoE Port):
                  <input defaultValue="0" className={clsx(FIELD, 'w-14')} />
                </label>
              </div>
            </div>
          </div>
          <ObjectTable />
        </div>
      </div>
      <ScrollBar thumb="h-[200px]" tail />
    </div>
  )
}

const VARIABLES = [
  ['varIn', 'Position Value', '147033', 'UDINT', '4.0', '39.0', 'Input'],
  ['varIn', 'Speed Value 3...', '-9', 'DINT', '4.0', '43.0', 'Input'],
  ['varIn', 'Alarm Status', '0', 'UINT', '2.0', '47.0', 'Input'],
  ['varIn', 'Warring Status', '0', 'UINT', '2.0', '49.0', 'Input'],
  ['varIn', 'Time Stamp Sec', '98877', 'UDINT', '4.0', '51.0', 'Input'],
  ['varIn', 'WcState', '0', 'BIT', '0.1', '1522.1', 'Input'],
  ['varIn', 'InputToggle', '0', 'BIT', '0.1', '1524.1', 'Input'],
  ['varIn', 'State', '8', 'UINT', '2.0', '1548.0', 'Input'],
  ['varLinked', 'AdsAddr', '192.168.1.8.4.1:1001', 'AMSADDR', '8.0', '1550.0', 'Input'],
  ['varOut', 'Control Word 1', '0', 'UINT', '2.0', '39.0', 'Outp...'],
]

const VAR_HEADS = ['Name', '', 'Online', 'Type', 'Size', '>Add...', 'In/Out', 'User...', 'Linked to']

function VariableTable() {
  return (
    <div className="min-h-0 flex-1 overflow-hidden border-t border-[#696969] bg-white text-black">
      <table className="w-full table-fixed border-collapse">
        <colgroup>
          <col className="w-[120px]" /><col className="w-5" /><col className="w-[137px]" /><col className="w-20" /><col className="w-[50px]" />
          <col className="w-[58px]" /><col className="w-[50px]" /><col className="w-[50px]" /><col className="w-[151px]" /><col />
        </colgroup>
        <thead>
          <tr className="h-[25px] border-b border-[#d5d5d5] bg-linear-to-b from-white from-40% to-[#f1f2f4]">
            {VAR_HEADS.map((head) => (
              <th key={head} className="border-r border-[#dedfe1] pl-1.5 text-left font-normal whitespace-nowrap">{head}</th>
            ))}
            <th />
          </tr>
        </thead>
        <tbody>
          {VARIABLES.map(([icon, name, online, type, size, addr, dir]) => (
            <tr key={name} className="h-[21px] whitespace-nowrap">
              <td className="pl-[5px]">
                <span className="flex items-center gap-px">
                  <Icon name={icon} />
                  {name}
                </span>
              </td>
              <td />
              <td className="pl-1.5">{online}</td>
              <td className="pl-1.5">{type}</td>
              <td className="pl-1.5">{size}</td>
              <td className="pl-1.5">{addr}</td>
              <td className="pl-1.5">{dir}</td>
              <td className="pl-1.5">0</td>
              <td />
              <td />
            </tr>
          ))}
        </tbody>
      </table>
    </div>
  )
}

// Red marks drawn over the editor: tab ellipse, two arrows and the frame round the live values
function Annotations() {
  return (
    <svg className="pointer-events-none absolute top-0 left-0 h-[585px] w-[787px]" viewBox="367 112 787 585" aria-hidden="true">
      <g fill="none" stroke="#fe1f12" strokeWidth="3">
        <ellipse cx="768.500" cy="153" rx="47" ry="20.500" />
        <rect x="369.500" y="455.500" width="603" height="219" rx="2" />
      </g>
      <g fill="#fe1f12">
        <path d="M784 165l27 2-8 4 64 60-75-55-2 5z" />
        <path d="M938 469l9-16 3 3 118-63-113 72-3 2 3 2z" />
      </g>
    </svg>
  )
}

function Editor() {
  return (
    <div className="relative flex min-w-0 flex-1 flex-col">
      <div className="flex h-[21px] shrink-0 items-center justify-between">
        <div className="flex h-full items-center bg-[#fff29d] pr-[5px] pl-1 text-black">
          TwinCAT Project2
          <button aria-label="Pin tab" className="ml-3 text-[#6b6337]"><Icon name="pin" className="size-3 rotate-90" /></button>
          <button aria-label="Close tab" className="ml-1.5 text-[#6b6337]"><Icon name="close" className="size-3.5" /></button>
        </div>
        <button aria-label="Open documents" className="pr-[3px] text-[#ced4dd]"><Arrow className="h-[5px] w-2" /></button>
      </div>
      <div className="h-0.5 shrink-0 bg-[#fff29d]" />
      <div className="flex min-h-0 flex-1 flex-col border-x-2 border-b-2 border-[#8e9bbc] border-b-[#d5d9e3] border-r-[#d5d9e3] bg-[#f0f0f0]">
        <div className="flex min-h-0 flex-1 flex-col border-t border-l border-[#696969]">
          <DevicePages />
          <div className="h-[5px] shrink-0 border-y border-white bg-[#e8e8e8]" />
          <VariableTable />
        </div>
      </div>
      <Annotations />
    </div>
  )
}

function ErrorList() {
  return (
    <div className="flex w-[200px] shrink-0 flex-col">
      <div className="flex min-h-0 flex-1 flex-col border border-[#8e9bbc] bg-white">
        <PanelTitle title="错误列表" />
        <div className="flex h-[26px] shrink-0 items-center bg-[#cfd6e5] pl-[7px] text-black">
          <Combo label="Scope" value="整个解决方案" className="h-5 w-[150px]" />
          <div className="w-[3px]" />
          <Sep />
          <button aria-label="More options" className="ml-auto flex h-full w-2.5 justify-center bg-[#dce0ec] pt-1">
            <svg viewBox="0 0 7 5" className="h-[5px] w-[7px]"><path d="M0 0l3 2.500L0 5zM4 0l3 2.500L4 5z" fill="#1b293e" /></svg>
          </button>
        </div>
        <SearchBox label="搜索错误列表" placeholder="搜索错误列表" />
        <div className="flex-1 border-t-2 border-[#cfd6e5]">
          <table className="w-full table-fixed border-collapse text-[#1b293e]">
            <colgroup><col className="w-[27px]" /><col className="w-[26px]" /><col className="w-[100px]" /><col /></colgroup>
            <thead>
              <tr className="h-[22px] border-b border-[#cccedb] bg-[#f6f6f6]">
                <th className="border-r border-[#cccedb]" />
                <th className="border-r border-[#cccedb] pr-1 pb-2">
                  <svg viewBox="0 0 6 6" className="ml-auto size-1.5"><path d="M0 0h6v6z" fill="#555" /></svg>
                </th>
                <th className="border-r border-[#cccedb] pl-[3px] text-left font-normal">
                  <span className="flex items-center gap-2.5">说明 <Arrow className="h-[5px] w-2" /></span>
                </th>
                <th className="pl-[3px] text-left font-normal">项目</th>
              </tr>
            </thead>
          </table>
        </div>
      </div>
      <div className="flex h-[21px] shrink-0 text-white">
        <button className="border-x border-b border-[#8e9bbc] bg-white px-[5px] text-black">错误列表</button>
        <button className="bg-[#4d6082] px-1.5">输出</button>
        <button className="bg-[#4d6082] px-1.5">属性</button>
        <button className="bg-[#4d6082] px-1.5">工具箱</button>
      </div>
    </div>
  )
}

const TASKS = [
  'bg-[#dfe6f2]', 'bg-[#c9b85a]', 'bg-[#1f7fe0]', 'bg-[#bfe3f5]', 'bg-[#f78b1f]',
  'bg-[#2f6b3c]', 'bg-[#2a2a2a]', 'bg-[#d8d4c8]', 'bg-[#4a90f0]', 'bg-[#d3a018]',
]

function Taskbar() {
  return (
    <div className="flex h-2 shrink-0 items-start gap-1 overflow-hidden border-t border-[#0c1622] bg-linear-to-r from-[#34506f] via-[#2a3c55] to-[#131c2c] pl-3">
      <div className="mt-px h-8 w-8 shrink-0 rounded-full border border-[#b8d3e8] bg-[#4b83b0]" />
      <div className="mt-[3px] ml-6 h-4 w-8 shrink-0 rounded-md bg-[#f4001c]" />
      <div className="mt-[3px] mr-4 ml-7 h-4 w-7 shrink-0 bg-[#dcdcdc]" />
      {TASKS.map((color, i) => (
        <div key={color} className={clsx('flex h-8 w-[58px] shrink-0 justify-center rounded-[2px] border border-[#c3cad3] pt-1', i === 9 || i === 0 ? 'bg-[#bcc5d2]' : 'bg-[#6d7b8d]')}>
          <span className={clsx('h-6 w-6', color)} />
        </div>
      ))}
      <div className="ml-auto pr-6 text-white">21:30 周六</div>
    </div>
  )
}

export default function App() {
  return (
    <div className="flex h-screen flex-col overflow-hidden bg-[#d6dbe9] font-['Noto_Sans','Noto_Sans_CJK_SC',sans-serif] text-[12px] leading-4">
      <TitleBar />
      <nav className="flex h-6 shrink-0 items-center gap-px text-[#1b293e]">
        {MENUS.map((menu) => (
          <button key={menu} className="px-2.5 whitespace-nowrap">{menu}</button>
        ))}
      </nav>
      <Toolbars />
      <main className="flex min-h-0 flex-1 gap-1.5 bg-[#2b3b58] px-1.5 py-1.5">
        <SolutionExplorer />
        <Editor />
        <ErrorList />
      </main>
      <footer className="flex h-[25px] shrink-0 items-center bg-[#007acc] px-1 text-white">
        <svg viewBox="0 0 16 12" className="h-3 w-4"><path d="M4 1h11l-3 10H1z" stroke="#fff" strokeWidth="1.400" fill="none" /></svg>
        <span className="ml-2 flex-1">就绪</span>
        <Icon name="cogRed" />
        <div className="flex w-[405px] items-center justify-end gap-2 pr-3">
          <svg viewBox="0 0 10 12" className="h-3 w-2.5"><path d="M5 11V2M1 5.500 5 1.500l4 4" stroke="#fff" strokeWidth="1.600" fill="none" /></svg>
          <button>添加到源代码管理</button>
          <Arrow className="h-1 w-1.5 rotate-180" />
        </div>
      </footer>
      <Taskbar />
    </div>
  )
}
